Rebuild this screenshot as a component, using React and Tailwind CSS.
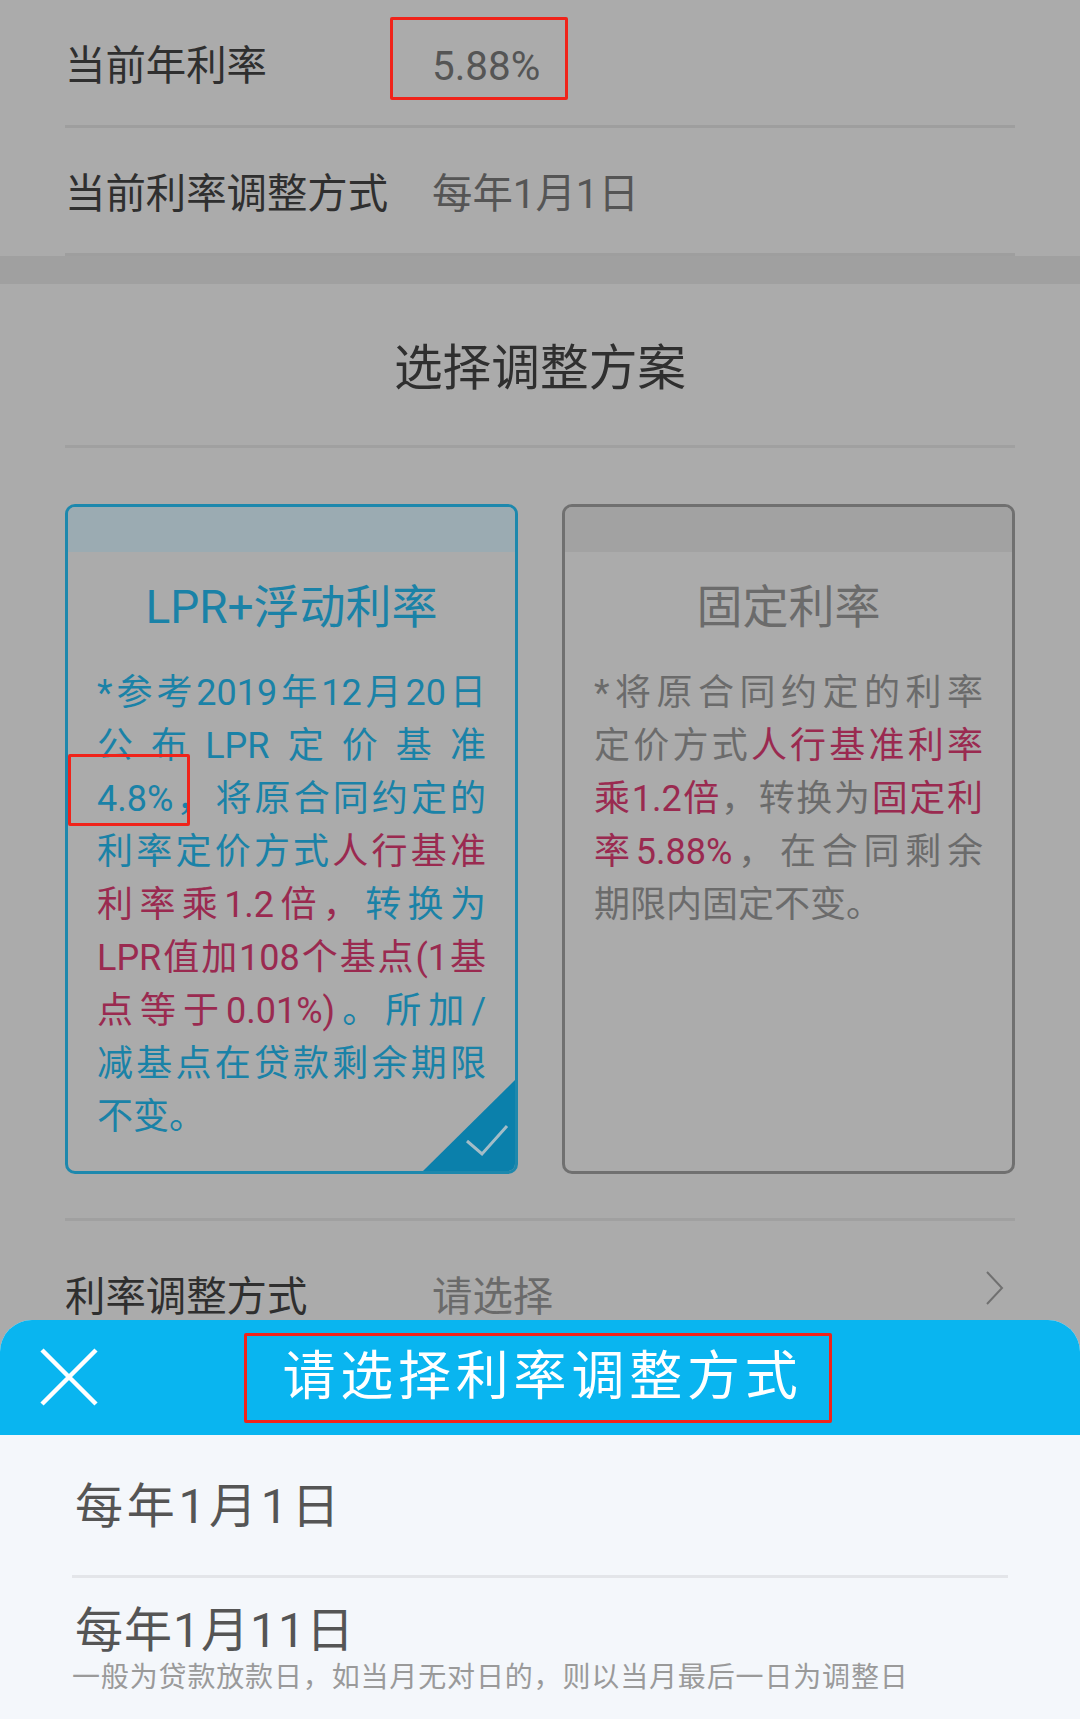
import React from 'react';

const FONT = 'font-[Roboto,"Noto_Sans_CJK_SC",sans-serif]';

// one justified text line of a card; r marks the red runs
const Line = ({ parts, last }) => (
    <div className={`h-[53px] leading-[53px] whitespace-nowrap ${last ? 'text-left' : 'text-justify [text-align-last:justify]'}`}>
        {parts.map((p, i) => (p.r ? <span key={i} className="text-[#9a2a50]">{p.r}</span> : <span key={i}>{p}</span>))}
    </div>
);

const lprLines = [
    ['*参考2019年12月20日'],
    ['公布LPR定价基准'],
    ['4.8%，将原合同约定的'],
    ['利率定价方式', { r: '人行基准' }],
    [{ r: '利率乘1.2倍，' }, '转换为'],
    [{ r: 'LPR值加108个基点(1基' }],
    [{ r: '点等于0.01%)' }, '。所加/'],
    ['减基点在贷款剩余期限'],
    ['不变。'],
];

const fixedLines = [
    ['*将原合同约定的利率'],
    ['定价方式', { r: '人行基准利率' }],
    [{ r: '乘1.2倍' }, '，转换为', { r: '固定利' }],
    [{ r: '率5.88%' }, '，在合同剩余'],
    ['期限内固定不变。'],
];

const Card = ({ title, lines, active }) => (
    <div className={`relative flex-1 h-[670px] rounded-[10px] border-[3px] overflow-hidden ${active ? 'border-[#1d88ad] text-[#1a82a7]' : 'border-[#707070] text-[#6b6b6b]'}`}>
        <div className={`h-[45px] ${active ? 'bg-[#9babb2]' : 'bg-[#a2a2a2]'}`} />
        <div className="h-[115px] pb-[4px] flex items-center justify-center text-[46px]">{title}</div>
        <div className="px-[29px] text-[36px]">
            {lines.map((l, i) => (
                <Line key={i} parts={l} last={i === lines.length - 1} />
            ))}
        </div>
        {active && (
            <svg className="absolute right-0 bottom-0" width="92" height="91" viewBox="0 0 92 91">
                <polygon points="92,0 92,91 0,91" fill="#0b80ab" />
                <polyline points="44,61 59,74 84,46" fill="none" stroke="#a3bcc7" strokeWidth="3" />
            </svg>
        )}
    </div>
);

const Row = ({ label, value, children }) => (
    <div className="relative mx-[65px] h-[128px] pt-[9px] border-b-[3px] border-[#9e9e9e] flex items-center text-[40.4px]">
        <span className="w-[367px] text-[#2f2f2f] whitespace-nowrap">{label}</span>
        <span className="text-[#555555]">{value}</span>
        {children}
    </div>
);

export default function App() {
    return (
        <div className={`relative w-[1080px] h-[1719px] overflow-hidden bg-[#ababab] ${FONT}`}>
            <Row label="当前年利率" value="5.88%">
                <div className="absolute left-[325px] top-[17px] w-[178px] h-[83px] border-[3px] border-[#f0231a] rounded-[2px]" />
            </Row>
            <Row label="当前利率调整方式" value="每年1月1日" />
            <div className="h-[28px] bg-[#a0a0a0]" />
            <div className="mx-[65px] h-[164px] pt-[9px] border-b-[3px] border-[#a0a0a0] flex items-center justify-center text-[48.7px] text-[#2f2f2f]">
                选择调整方案
            </div>
            <div className="relative mx-[65px] mt-[56px] flex gap-[44px]">
                <Card title="LPR+浮动利率" lines={lprLines} active />
                <Card title="固定利率" lines={fixedLines} />
                <div className="absolute left-[3px] top-[250px] w-[122px] h-[72px] border-[3px] border-[#f0231a] rounded-[2px]" />
            </div>
            <div className="mx-[65px] mt-[44px] h-[3px] bg-[#a0a0a0]" />
            <div className="mx-[65px] flex items-center justify-between pt-[49px] text-[40.4px] leading-[56px]">
                <span className="w-[367px] text-[#2f2f2f]">利率调整方式</span>
                <span className="flex-1 text-[#6a6a6a]">请选择</span>
                <svg className="mr-[11px] -mt-[20px]" width="19" height="34" viewBox="0 0 19 34">
                    <polyline points="2,1 17,17 2,33" fill="none" stroke="#707070" strokeWidth="2" />
                </svg>
            </div>

            {/* bottom sheet */}
            <div className="absolute left-0 right-0 top-[1320px] bottom-0 rounded-t-[32px] overflow-hidden bg-[#f4f7fb]">
                <div className="relative h-[115px] pl-[5px] bg-[#09b5f0] flex items-center justify-center text-white text-[53px] tracking-[4.8px]">
                    <svg className="absolute left-[40px] top-[28px]" width="58" height="58" viewBox="0 0 58 58">
                        <path d="M2 2 L56 56 M56 2 L2 56" stroke="#fff" strokeWidth="4.5" fill="none" />
                    </svg>
                    <div className="absolute left-[244px] top-[13px] w-[588px] h-[90px] border-[3px] border-[#f0231a] rounded-[2px]" />
                    <span className="relative">请选择利率调整方式</span>
                </div>
                <div className="mx-[72px] h-[143px] pt-[4px] border-b-[3px] border-[#e3e5e9] flex items-center pl-[3px] text-[48px] tracking-[3.7px] text-[#555555]">
                    每年1月1日
                </div>
                <div className="mx-[72px] pt-[22px]">
                    <div className="pl-[3px] text-[48px] leading-[61px] tracking-[1px] text-[#555555]">每年1月11日</div>
                    <div className="text-[28px] leading-[34px] tracking-[0.85px] whitespace-nowrap text-[#9a9a9a]">
                        一般为贷款放款日，如当月无对日的，则以当月最后一日为调整日
                    </div>
                </div>
            </div>
        </div>
    );
}
